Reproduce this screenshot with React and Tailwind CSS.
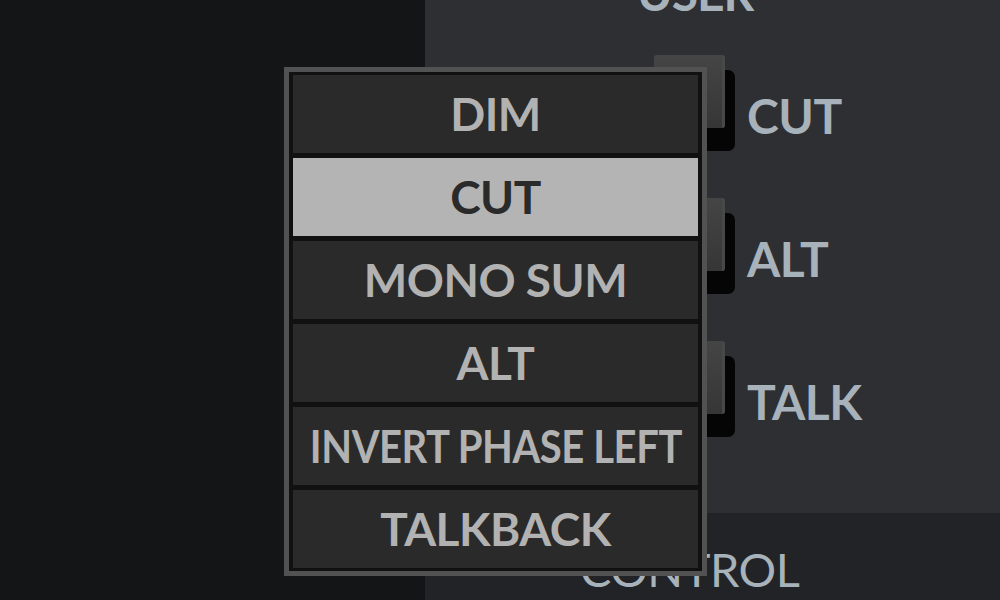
import React from 'react';

const options = ['DIM', 'CUT', 'MONO SUM', 'ALT', 'INVERT PHASE LEFT', 'TALKBACK'];
const keys = ['CUT', 'ALT', 'TALK'];

const KeyButton = ({ label }) => (
  <div className="flex h-[143px] items-start">
    <div className="h-[73px] w-[71px] rounded-[3px] bg-linear-to-b from-[#454545] to-[#363636] border-r-[3px] border-[#484848] shadow-[6px_19px_0_4px_#050505]" />
    <span className="ml-[22px] mt-[37px] text-[48px] font-bold leading-none tracking-[-0.5px] text-[#a7b2bb]">{label}</span>
  </div>
);

export default function App() {
  const selected = 'CUT';

  return (
    <div className="relative flex h-[600px] w-[1000px] overflow-hidden font-['Lato','Noto_Sans',sans-serif]">
      <div className="w-[425px] bg-[#141516]" />

      <div className="flex flex-1 flex-col">
        <div className="flex h-[513px] flex-col bg-[#2d2f33] pl-[212px]">
          <div className="mt-[-31px] text-[48px] font-bold leading-none tracking-[-1px] text-[#a7b2bb]">USER</div>
          <div className="mt-[38px] flex flex-col pl-[17px]">
            {keys.map((k) => (
              <KeyButton key={k} label={k} />
            ))}
          </div>
        </div>
        <div className="flex-1 bg-[#222326] pl-[155px] pt-[33px]">
          <div className="text-[47px] leading-none tracking-[-0.5px] text-[#a7b2bb]">CONTROL</div>
        </div>
      </div>

      <div className="absolute left-[284px] top-[67px] flex w-[423px] flex-col gap-[5px] border-[5px] border-[#525252] bg-[#111111] px-[4px] py-[3px]">
        {options.map((o) => (
          <div
            key={o}
            className={
              o === selected
                ? 'flex h-[78px] items-center justify-center whitespace-nowrap bg-[#b4b4b4] text-[46px] font-bold leading-none tracking-[-0.5px] text-[#2a2a2a]'
                : 'flex h-[78px] items-center justify-center whitespace-nowrap bg-[#2a2a2a] text-[46px] font-bold leading-none tracking-[-0.5px] text-[#b2b2b2]'
            }
          >
            <span className={o.length > 12 ? 'inline-block scale-x-[0.87]' : 'inline-block'}>{o}</span>
          </div>
        ))}
      </div>
    </div>
  );
}
